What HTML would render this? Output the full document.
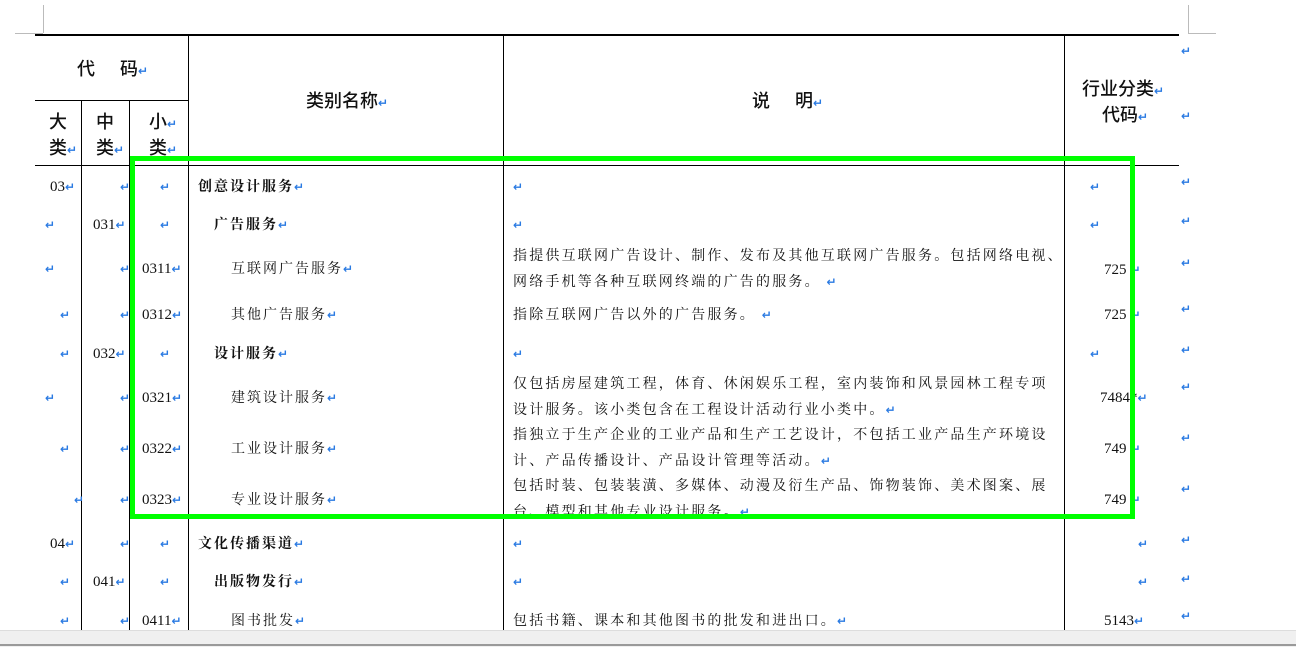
<!DOCTYPE html><html><head><meta charset="utf-8"><style>
body{margin:0;width:1296px;height:646px;background:#fff;position:relative;overflow:hidden;font-family:"Liberation Serif","Noto Serif CJK SC",serif;color:#111}
.a{position:absolute;white-space:nowrap;font-size:15px;line-height:16px;transform:translateY(2px)}
.h{font-family:"Liberation Sans","Noto Sans CJK SC",sans-serif;font-size:18px;line-height:20px;font-weight:500}
.r{color:#2a7ae2;font-size:12px;font-family:"DejaVu Sans",sans-serif;font-weight:bold}
.l{position:absolute;background:#000}
.d{letter-spacing:2px;font-size:14px}
</style></head><body>
<div class="l" style="left:43px;top:5px;width:1px;height:28px;background:#bbb"></div>
<div class="l" style="left:15px;top:33px;width:28px;height:1px;background:#bbb"></div>
<div class="l" style="left:1188px;top:5px;width:1px;height:28px;background:#bbb"></div>
<div class="l" style="left:1188px;top:33px;width:28px;height:1px;background:#bbb"></div>
<div class="l" style="left:35px;top:34px;width:1144px;height:2px"></div>
<div class="l" style="left:35px;top:100px;width:153px;height:1px"></div>
<div class="l" style="left:35px;top:165px;width:1144px;height:1px"></div>
<div class="l" style="left:81px;top:100px;width:1px;height:530px"></div>
<div class="l" style="left:129px;top:100px;width:1px;height:530px"></div>
<div class="l" style="left:188px;top:36px;width:1px;height:594px"></div>
<div class="l" style="left:503px;top:36px;width:1px;height:594px"></div>
<div class="l" style="left:1064px;top:36px;width:1px;height:594px"></div>
<div class="a h" style="left:77px;top:57px">代&nbsp;&nbsp;&nbsp;&nbsp;&nbsp;码<span class="r">↵</span></div>
<div class="a h" style="left:306px;top:89px">类别名称<span class="r">↵</span></div>
<div class="a h" style="left:752px;top:89px">说&nbsp;&nbsp;&nbsp;&nbsp;&nbsp;明<span class="r">↵</span></div>
<div class="a h" style="left:1082px;top:77px">行业分类<span class="r">↵</span></div>
<div class="a h" style="left:1102px;top:103px">代码<span class="r">↵</span></div>
<div class="a h" style="left:49px;top:110px">大</div><div class="a h" style="left:49px;top:136px">类<span class="r">↵</span></div>
<div class="a h" style="left:96px;top:110px">中</div><div class="a h" style="left:96px;top:136px">类<span class="r">↵</span></div>
<div class="a h" style="left:149px;top:110px">小<span class="r">↵</span></div><div class="a h" style="left:149px;top:136px">类<span class="r">↵</span></div>
<div class="a r" style="left:1181px;top:41px">↵</div><div class="a r" style="left:1181px;top:106px">↵</div>
<div class="a r" style="left:1181px;top:172px">↵</div><div class="a r" style="left:1181px;top:211px">↵</div>
<div class="a r" style="left:1181px;top:253px">↵</div><div class="a r" style="left:1181px;top:299px">↵</div>
<div class="a r" style="left:1181px;top:340px">↵</div><div class="a r" style="left:1181px;top:377px">↵</div>
<div class="a r" style="left:1181px;top:428px">↵</div><div class="a r" style="left:1181px;top:479px">↵</div>
<div class="a r" style="left:1181px;top:530px">↵</div><div class="a r" style="left:1181px;top:569px">↵</div>
<div class="a r" style="left:1181px;top:606px">↵</div>

<div class="a" style="left:50px;top:177px">03<span class="r">↵</span></div><div class="a r" style="left:120px;top:177px">↵</div><div class="a r" style="left:160px;top:177px">↵</div>
<div class="a d" style="left:198px;top:177px;font-weight:bold">创意设计服务<span class="r">↵</span></div><div class="a r" style="left:513px;top:177px">↵</div><div class="a r" style="left:1090px;top:177px">↵</div>

<div class="a r" style="left:45px;top:215px">↵</div><div class="a" style="left:93px;top:215px">031<span class="r">↵</span></div><div class="a r" style="left:160px;top:215px">↵</div>
<div class="a d" style="left:214px;top:215px;font-weight:bold">广告服务<span class="r">↵</span></div><div class="a r" style="left:513px;top:215px">↵</div><div class="a r" style="left:1090px;top:215px">↵</div>

<div class="a r" style="left:45px;top:259px">↵</div><div class="a r" style="left:120px;top:259px">↵</div><div class="a" style="left:142px;top:259px">0311<span class="r">↵</span></div>
<div class="a d" style="left:231px;top:259px">互联网广告服务<span class="r">↵</span></div>
<div class="a d" style="left:513px;top:247px;letter-spacing:2.2px">指提供互联网广告设计、制作、发布及其他互联网广告服务。包括网络电视、</div>
<div class="a d" style="left:513px;top:272px;letter-spacing:2.2px">网络手机等各种互联网终端的广告的服务。 <span class="r">↵</span></div>
<div class="a" style="left:1104px;top:260px">725<span class="r">&nbsp;↵</span></div>

<div class="a r" style="left:60px;top:305px">↵</div><div class="a r" style="left:120px;top:305px">↵</div><div class="a" style="left:142px;top:305px">0312<span class="r">↵</span></div>
<div class="a d" style="left:231px;top:305px">其他广告服务<span class="r">↵</span></div>
<div class="a d" style="left:513px;top:305px;letter-spacing:2.2px">指除互联网广告以外的广告服务。 <span class="r">↵</span></div>
<div class="a" style="left:1104px;top:305px">725<span class="r">&nbsp;↵</span></div>

<div class="a r" style="left:60px;top:344px">↵</div><div class="a" style="left:93px;top:344px">032<span class="r">↵</span></div><div class="a r" style="left:160px;top:344px">↵</div>
<div class="a d" style="left:214px;top:344px;font-weight:bold">设计服务<span class="r">↵</span></div><div class="a r" style="left:513px;top:344px">↵</div><div class="a r" style="left:1090px;top:344px">↵</div>

<div class="a r" style="left:45px;top:388px">↵</div><div class="a r" style="left:120px;top:388px">↵</div><div class="a" style="left:142px;top:388px">0321<span class="r">↵</span></div>
<div class="a d" style="left:231px;top:388px">建筑设计服务<span class="r">↵</span></div>
<div class="a d" style="left:513px;top:375px;letter-spacing:2.2px">仅包括房屋建筑工程，体育、休闲娱乐工程，室内装饰和风景园林工程专项</div>
<div class="a d" style="left:513px;top:400px;letter-spacing:2.2px">设计服务。该小类包含在工程设计活动行业小类中。<span class="r">↵</span></div>
<div class="a" style="left:1100px;top:388px">7484*<span class="r">↵</span></div>

<div class="a r" style="left:60px;top:439px">↵</div><div class="a r" style="left:120px;top:439px">↵</div><div class="a" style="left:142px;top:439px">0322<span class="r">↵</span></div>
<div class="a d" style="left:231px;top:439px">工业设计服务<span class="r">↵</span></div>
<div class="a d" style="left:513px;top:426px;letter-spacing:2.2px">指独立于生产企业的工业产品和生产工艺设计，不包括工业产品生产环境设</div>
<div class="a d" style="left:513px;top:451px;letter-spacing:2.2px">计、产品传播设计、产品设计管理等活动。<span class="r">↵</span></div>
<div class="a" style="left:1104px;top:439px">749<span class="r">&nbsp;↵</span></div>

<div class="a r" style="left:74px;top:490px">↵</div><div class="a r" style="left:120px;top:490px">↵</div><div class="a" style="left:142px;top:490px">0323<span class="r">↵</span></div>
<div class="a d" style="left:231px;top:490px">专业设计服务<span class="r">↵</span></div>
<div class="a d" style="left:513px;top:477px;letter-spacing:2.2px">包括时装、包装装潢、多媒体、动漫及衍生产品、饰物装饰、美术图案、展</div>
<div class="a d" style="left:513px;top:502px;letter-spacing:2.2px">台、模型和其他专业设计服务。<span class="r">↵</span></div>
<div class="a" style="left:1104px;top:490px">749<span class="r">&nbsp;↵</span></div>

<div class="a" style="left:50px;top:534px">04<span class="r">↵</span></div><div class="a r" style="left:120px;top:534px">↵</div><div class="a r" style="left:160px;top:534px">↵</div>
<div class="a d" style="left:198px;top:534px;font-weight:bold">文化传播渠道<span class="r">↵</span></div><div class="a r" style="left:513px;top:534px">↵</div><div class="a r" style="left:1138px;top:534px">↵</div>

<div class="a r" style="left:60px;top:572px">↵</div><div class="a" style="left:93px;top:572px">041<span class="r">↵</span></div><div class="a r" style="left:160px;top:572px">↵</div>
<div class="a d" style="left:214px;top:572px;font-weight:bold">出版物发行<span class="r">↵</span></div><div class="a r" style="left:513px;top:572px">↵</div><div class="a r" style="left:1138px;top:572px">↵</div>

<div class="a r" style="left:60px;top:611px">↵</div><div class="a r" style="left:120px;top:611px">↵</div><div class="a" style="left:142px;top:611px">0411<span class="r">↵</span></div>
<div class="a d" style="left:231px;top:611px">图书批发<span class="r">↵</span></div>
<div class="a d" style="left:513px;top:611px;letter-spacing:2.2px">包括书籍、课本和其他图书的批发和进出口。<span class="r">↵</span></div>
<div class="a" style="left:1104px;top:611px">5143<span class="r">↵</span></div>

<div style="position:absolute;left:130px;top:156px;width:995px;height:353px;border:5px solid #00ff00"></div>
<div style="position:absolute;left:0;top:630px;width:1296px;height:16px;background:#f0f0f0;border-top:1px solid #ddd"></div>
<div style="position:absolute;left:0;top:644px;width:1296px;height:2px;background:#9a9a9a"></div>
</body></html>
